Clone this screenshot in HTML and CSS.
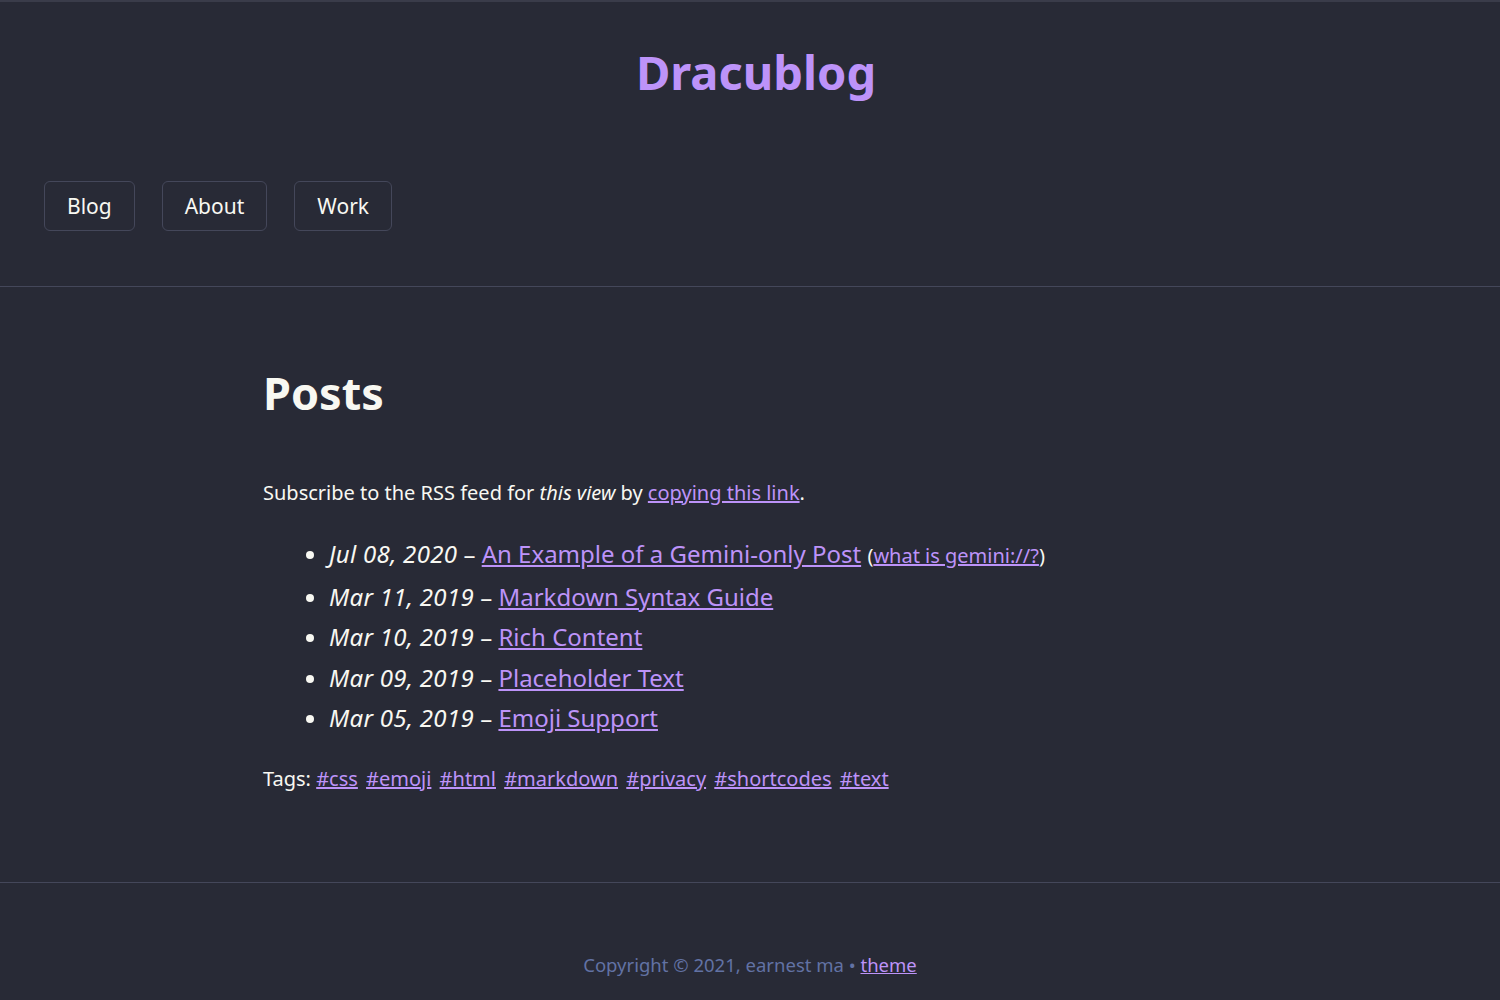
FILE: index.html
```html
<!DOCTYPE html>
<html lang="en">
<head>
<meta charset="utf-8">
<title>Dracublog</title>
<link rel="stylesheet" href="styles.css">
</head>
<body>
<header class="site-header">
  <h1 class="site-title">Dracublog</h1>
  <nav class="site-nav">
    <a class="nav-btn" href="#">Blog</a>
    <a class="nav-btn" href="#">About</a>
    <a class="nav-btn" href="#">Work</a>
  </nav>
</header>
<main class="content">
  <h2 class="page-title">Posts</h2>
  <p class="rss">Subscribe to the RSS feed for <em>this view</em> by <a href="#">copying this link</a>.</p>
  <ul class="posts">
    <li><em>Jul 08, 2020</em> – <a href="#">An Example of a Gemini-only Post</a> <span class="small">(<a href="#">what is gemini://?</a>)</span></li>
    <li><em>Mar 11, 2019</em> – <a href="#">Markdown Syntax Guide</a></li>
    <li><em>Mar 10, 2019</em> – <a href="#">Rich Content</a></li>
    <li><em>Mar 09, 2019</em> – <a href="#">Placeholder Text</a></li>
    <li><em>Mar 05, 2019</em> – <a href="#">Emoji Support</a></li>
  </ul>
  <p class="tags">Tags: <a href="#">#css</a> <a href="#">#emoji</a> <a href="#">#html</a> <a href="#">#markdown</a> <a href="#">#privacy</a> <a href="#">#shortcodes</a> <a href="#">#text</a></p>
</main>
<footer class="site-footer">
  <p>Copyright © 2021, earnest ma • <a href="#">theme</a></p>
</footer>
</body>
</html>
```
FILE: styles.css
```css
html, body {
  margin: 0;
  padding: 0;
  background: #282a36;
}
body {
  color: #f8f8f2;
  font-family: "Noto Sans", "Open Sans", sans-serif;
  border-top: 2px solid #3a3c4a;
}
a {
  color: #bd93f9;
}
.site-header {
  border-bottom: 1px solid #44475a;
  padding: 0 44px 55px;
}
.site-title {
  margin: 0;
  padding: 38px 0 0 12px;
  text-align: center;
  font-size: 47px;
  line-height: 64px;
  font-weight: 700;
  color: #bd93f9;
}
.site-nav {
  display: flex;
  gap: 27px;
  margin-top: 77px;
}
.nav-btn {
  display: block;
  color: #f8f8f2;
  text-decoration: none;
  font-size: 21px;
  line-height: 48px;
  padding: 0 22px;
  border: 1px solid #44475a;
  border-radius: 6px;
}
.content {
  max-width: 974px;
  margin: 0 auto;
  padding: 70px 0 87px;
}
.page-title {
  margin: 0;
  font-size: 45px;
  line-height: 72px;
  font-weight: 700;
}
.rss {
  margin: 48px 0 0;
  font-size: 20px;
  line-height: 32px;
}
.posts {
  margin: 25px 0 0;
  padding-left: 66px;
  font-size: 24px;
  line-height: 40.5px;
}
.posts em {
  letter-spacing: 0.3px;
}
.posts li::marker {
  font-size: 22px;
}
.posts .small {
  font-size: 20px;
}
.tags {
  margin: 24px 0 0;
  font-size: 20px;
  line-height: 32px;
}
.tags a {
  margin-left: 3px;
}
.tags a:first-child {
  margin-left: 0;
}
.site-footer {
  border-top: 1px solid #44475a;
  text-align: center;
  padding: 66px 0 10px;
}
.site-footer p {
  margin: 0;
  font-size: 18.5px;
  line-height: 32px;
  color: #6272a4;
}
```
